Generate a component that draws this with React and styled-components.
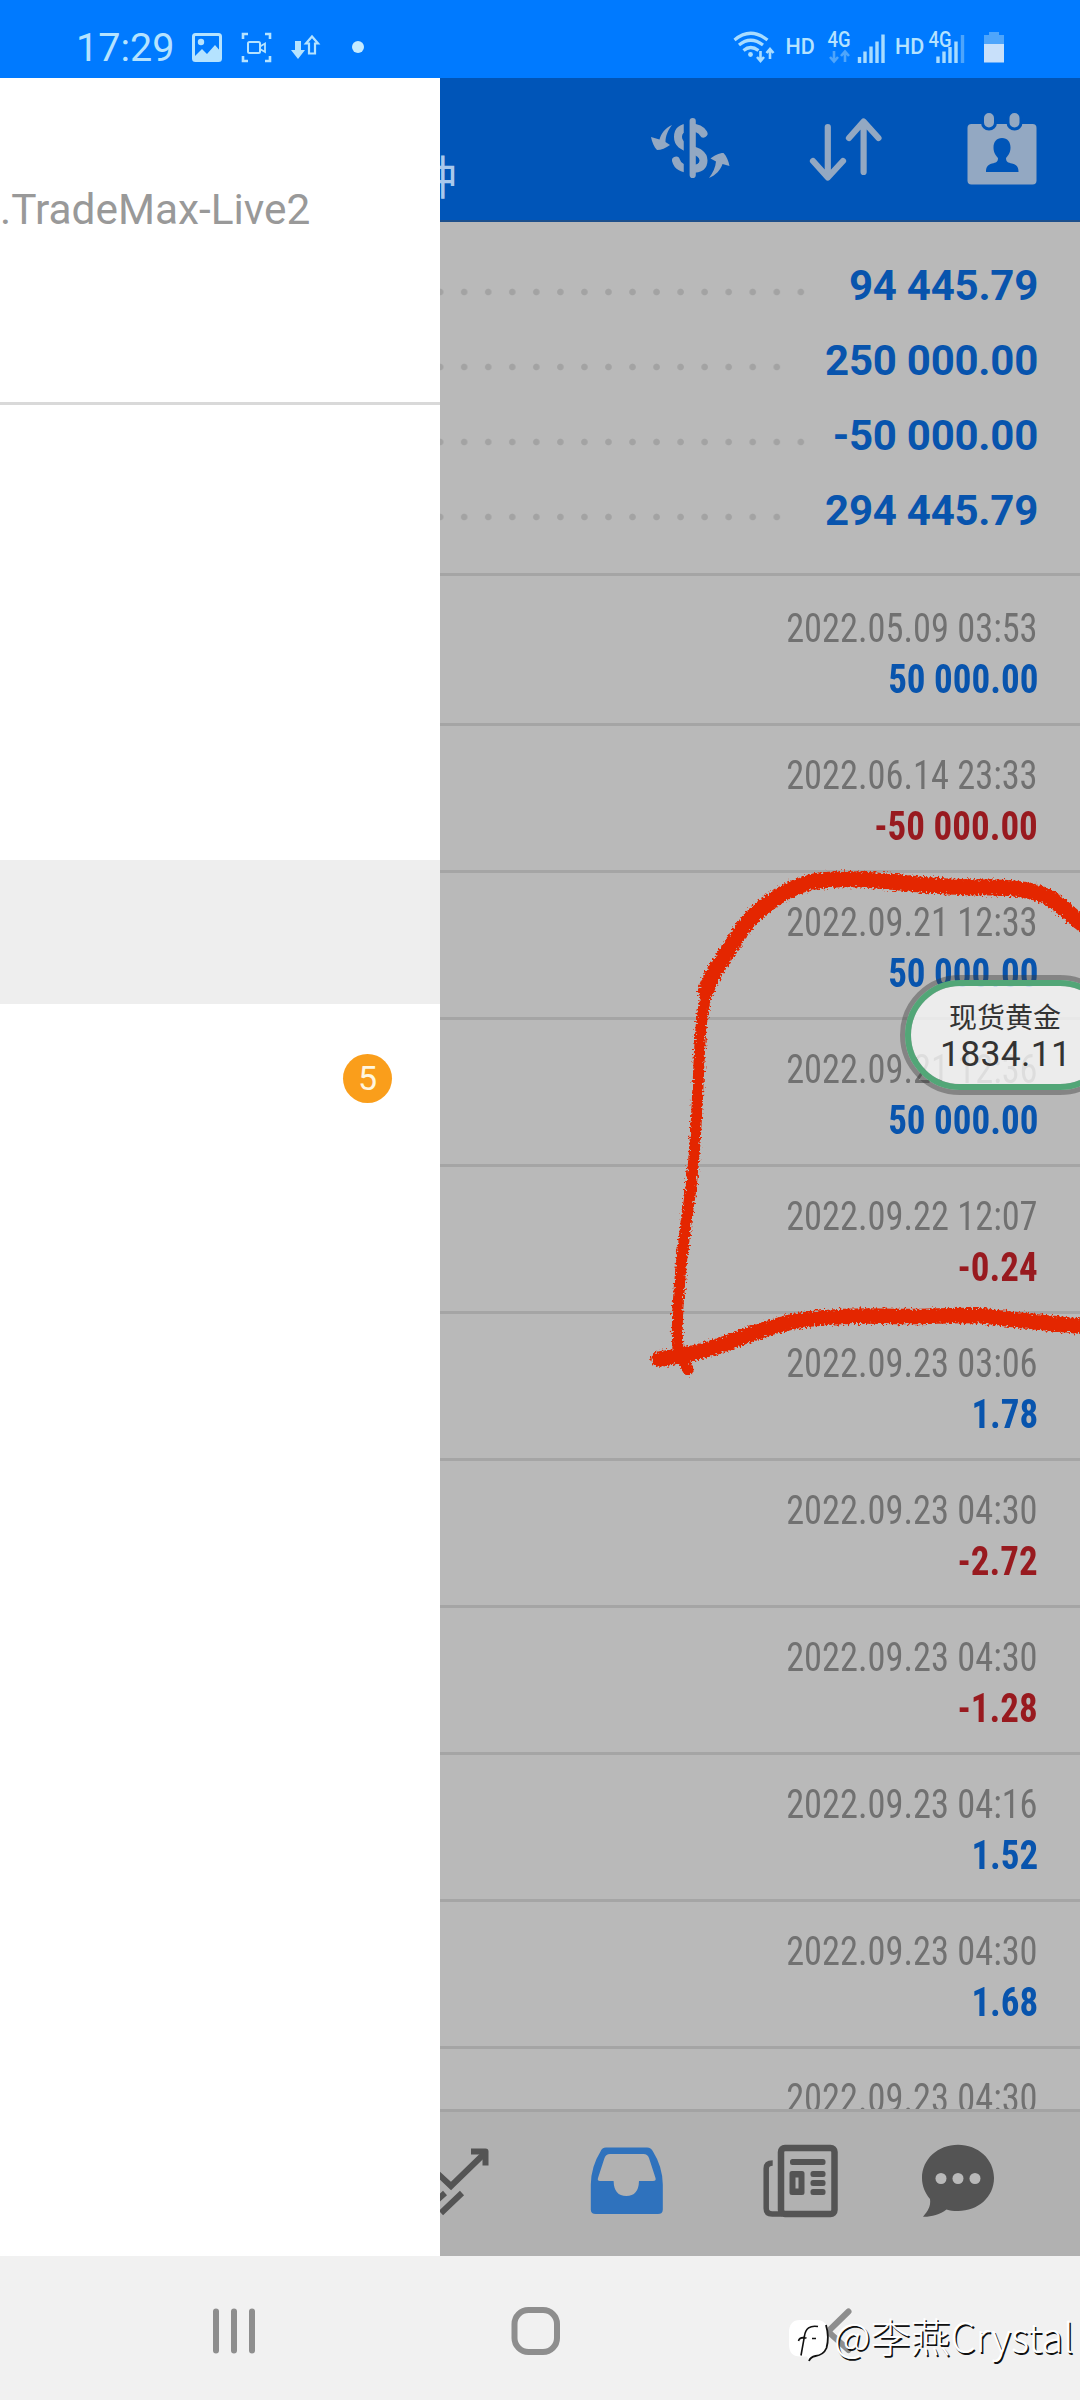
import React from 'react';
import styled, { createGlobalStyle } from 'styled-components';

const GlobalStyle = createGlobalStyle`
  * {
    box-sizing: border-box;
  }

  body {
    margin: 0;
    font-family: Roboto, "Noto Sans CJK SC", sans-serif;
  }

  svg {
    display: block;
    flex: none;
  }
`;

const Phone = styled.div`
  position: relative;
  display: flex;
  flex-direction: column;
  width: 1080px;
  height: 2400px;
  overflow: hidden;
  background: #fff;
`;

const StatusBar = styled.header`
  display: flex;
  justify-content: space-between;
  height: 78px;
  padding: 18px 76px 0 76px;
  background: #007aff;
  color: #b5e3ff;
`;

const StatusGroup = styled.div`
  display: flex;
  align-items: center;
  height: 60px;
`;

const Clock = styled.span`
  width: 110px;
  font-size: 39.5px;
  line-height: 62px;
`;

const Body = styled.div`
  display: flex;
  height: 2178px;
`;

const Drawer = styled.aside`
  width: 440px;
  background: #fff;
`;

const DrawerHead = styled.div`
  height: 327px;
  padding-top: 106px;
  border-bottom: 3px solid #d9d9d9;
  color: #999;
  font-size: 42.4px;
  line-height: 51px;
  white-space: nowrap;
`;

const DrawerList = styled.ul`
  margin: 0;
  padding: 455px 0 0;
  list-style: none;
`;

const DrawerItem = styled.li`
  display: flex;
  align-items: center;
  justify-content: flex-end;
  height: 144px;
  padding: 4px 48px 0 0;
  background: ${({ $active }) => ($active ? '#eeeeee' : 'transparent')};
`;

const Badge = styled.span`
  width: 49px;
  height: 49px;
  border-radius: 50%;
  background: #fa9e1b;
  color: #fff6e0;
  font-size: 34px;
  line-height: 49px;
  text-align: center;
`;

const Main = styled.main`
  display: flex;
  flex-direction: column;
  width: 640px;
  overflow: hidden;
  background: #b9b9b9;
`;

const AppBar = styled.div`
  display: flex;
  align-items: flex-start;
  height: 144px;
  background: #0055b8;
  border-bottom: 2px solid #1c4f8c;
`;

const Subtitle = styled.span`
  width: 200px;
  margin: 66px 0 0 -29px;
  color: #a9c8ec;
  font-family: "Noto Sans CJK SC", sans-serif;
  font-size: 46px;
  line-height: 60px;
`;

const ToolbarIcons = styled.div`
  display: flex;
  padding: 32px 0 0 29px;
  gap: 64px;
`;

const Summary = styled.section`
  padding: 26px 42px 25px 0;
  border-bottom: 3px solid #a5a5a5;
`;

const SummaryRow = styled.div`
  display: flex;
  justify-content: space-between;
  height: 75px;
  color: #0854ad;
  font-size: 42px;
  font-weight: 700;
  letter-spacing: -0.25px;
  line-height: 75px;
`;

const Leader = styled.span`
  width: ${({ $dots }) => $dots * 24.05 + 12}px;
  background: radial-gradient(circle at center, #a3a3a3 2.8px, transparent 3.8px) -11.9px 33.5px / 24.05px 24px repeat-x;
  background-position-y: 32px;
`;

const Deals = styled.ul`
  flex: 1;
  margin: 0;
  padding: 3px 0 0;
  overflow: hidden;
  list-style: none;
`;

const Deal = styled.li`
  display: flex;
  flex-direction: column;
  align-items: flex-end;
  height: 147px;
  padding: 24px 42px 0 0;
  border-bottom: 3px solid #a5a5a5;
  font-size: 40px;
  line-height: 51px;
  font-stretch: 75%;
`;

const DealTime = styled.span`
  color: #717171;
  transform: scaleX(0.909);
  transform-origin: right;
`;

const DealAmount = styled.span`
  color: ${({ $loss }) => ($loss ? '#981a1f' : '#0854ad')};
  font-weight: 700;
  transform: scaleX(0.925);
  transform-origin: right;
`;

const TabBar = styled.nav`
  display: flex;
  height: 147px;
  padding-top: 24px;
  border-top: 3px solid #a3a3a3;
  background: #b1b1b1;
`;

const NavBar = styled.footer`
  height: 144px;
  background: #f1f1f1;
`;

const PriceBubble = styled.div`
  position: absolute;
  top: 975px;
  left: 900px;
  width: 220px;
  height: 120px;
  border: 5px solid rgba(60, 60, 60, 0.42);
  border-radius: 60px;
`;

const BubbleInner = styled.div`
  display: flex;
  flex-direction: column;
  height: 110px;
  padding: 13px 0 0 29px;
  border: 6px solid #52a677;
  border-radius: 55px;
  background: rgba(249, 249, 249, 0.8);
  background-clip: padding-box;
  color: #333;
`;

const BubbleName = styled.span`
  margin-left: 9px;
  font-family: "Noto Sans CJK SC", sans-serif;
  font-size: 28px;
  line-height: 34px;
`;

const BubblePrice = styled.span`
  font-size: 35.5px;
  letter-spacing: 0.3px;
  line-height: 42px;
`;

const Marker = styled.svg`
  position: absolute;
  top: 861px;
  left: 640px;
`;

const Watermark = styled.div`
  position: absolute;
  top: 2312px;
  left: 786px;
  display: flex;
  height: 52px;
  color: #fff;
  font-family: "Noto Sans CJK SC", sans-serif;
  font-size: 40px;
  font-weight: 300;
  line-height: 46px;
  white-space: nowrap;
  text-shadow: 1.5px 1.5px 0.5px #111;
`;

const totals = [
  { value: '94 445.79', dots: 15 },
  { value: '250 000.00', dots: 14 },
  { value: '-50 000.00', dots: 15 },
  { value: '294 445.79', dots: 14 },
];

const deals = [
  { time: '2022.05.09 03:53', amount: '50 000.00' },
  { time: '2022.06.14 23:33', amount: '-50 000.00' },
  { time: '2022.09.21 12:33', amount: '50 000.00' },
  { time: '2022.09.21 12:36', amount: '50 000.00' },
  { time: '2022.09.22 12:07', amount: '-0.24' },
  { time: '2022.09.23 03:06', amount: '1.78' },
  { time: '2022.09.23 04:30', amount: '-2.72' },
  { time: '2022.09.23 04:30', amount: '-1.28' },
  { time: '2022.09.23 04:16', amount: '1.52' },
  { time: '2022.09.23 04:30', amount: '1.68' },
  { time: '2022.09.23 04:30', amount: '' },
];

const StatusLeftIcons = () => (
  <svg width="190" height="60" viewBox="186 18 190 60" fill="none" stroke="#b5e3ff">
    <rect x="193.5" y="34.5" width="27" height="26" rx="2" strokeWidth="3" />
    <circle cx="201" cy="42" r="3.2" fill="#b5e3ff" stroke="none" />
    <path d="M194 57l8-8 5 5 8-9 6 7v9h-27z" fill="#b5e3ff" stroke="none" />
    <path d="M243 39v-5h5M265 34h5v5M270 56v5h-5M248 61h-5v-5" strokeWidth="2.6" />
    <rect x="248" y="42" width="12" height="11" rx="1.5" strokeWidth="2" />
    <path d="M260 46.5l5-3v8.5l-5-3z" strokeWidth="1.8" />
    <path d="M295 41h6v9h4l-7 9-7-9h4z" fill="#b5e3ff" stroke="none" />
    <path d="M309 53.5v-10h-3l6-7 6 7h-3v10z" strokeWidth="2.2" />
    <circle cx="358" cy="47" r="6" fill="#c5ebff" stroke="none" />
  </svg>
);

const SmallText = styled.text`
  font-family: Roboto, sans-serif;
  font-size: 21.5px;
  font-weight: 500;
  stroke: none;
  fill: #b5e3ff;
`;

const StatusRightIcons = () => (
  <svg width="274" height="60" viewBox="730 18 274 60" fill="none" stroke="#a8dcff">
    <g strokeWidth="3.2">
      <path d="M734.5 40q16-13.5 33 0" />
      <path d="M739 45q11.5-9.5 24 0" />
      <path d="M743.5 50.5q7-6 15 0" />
    </g>
    <circle cx="750.5" cy="54.5" r="2.4" fill="#a8dcff" stroke="none" />
    <path d="M760.5 51v9M757 57l3.5 4 3.5-4M770 59v-9M766.5 53l3.5-4 3.5 4" strokeWidth="2.6" />
    <SmallText x="785.5" y="54">HD</SmallText>
    <SmallText x="827.5" y="46.5" textLength="23" lengthAdjust="spacingAndGlyphs">4G</SmallText>
    <path d="M834 51v10M830 57l4 4.5 4-4.5M845 62v-10M841 56l4-4.5 4 4.5" stroke="#4ea5fb" strokeWidth="2.6" />
    <g strokeWidth="3.4">
      <path d="M859.5 57v6M865 51.5v11.5M871 46.5v16.5M877 41.5v21.5M883 34.5v28.5" />
      <path d="M938 56.5v6.5M944 51.5v11.5M950 47v16M956 41.5v21.5" />
      <path d="M962.5 35v28" stroke="#4ea5fb" />
    </g>
    <SmallText x="895" y="54">HD</SmallText>
    <SmallText x="928.5" y="46.5" textLength="23" lengthAdjust="spacingAndGlyphs">4G</SmallText>
    <path d="M984 44v-9h5v-3h10v3h5v9z" fill="#4ea5fb" stroke="none" />
    <rect x="984" y="44" width="20" height="18.5" fill="#c8e0fa" stroke="none" />
  </svg>
);

const DollarIcon = () => (
  <svg width="100" height="80" viewBox="640 110 100 80" fill="none" stroke="#93a8c2">
    <path
      d="M703.5 133.5C701 129 697 127.5 690 127.5C681 127.5 678 131.5 678 137C678 144 683 146 690 149C698 152 703.5 154 703.5 160.5C703.5 166.5 699 169 691 169C682 169 677.5 166 676 160.5"
      strokeWidth="8"
      strokeLinecap="round"
    />
    <path d="M687 118v60" stroke="#0055b8" strokeWidth="6.5" />
    <path d="M692.7 121v54" strokeWidth="6.2" strokeLinecap="round" />
    <path
      d="M672 125C665 128 661 134 659.5 139.5L651 137C652 142 654 147 657 150C661 150 666 148 670 145L665.5 142C665.5 136 668 130 672 125z"
      fill="#93a8c2"
      stroke="none"
    />
    <path
      d="M709 178C716 175 720.5 170 722.5 164L729.5 166C728.5 161 726.5 156 723.5 153C719 153 714 155.5 710.5 158.5L716 161.5C715.5 167 713 173 709 178z"
      fill="#93a8c2"
      stroke="none"
    />
  </svg>
);

const SortIcon = () => (
  <svg width="94" height="80" viewBox="804 110 94 80" fill="none" stroke="#93a8c2" strokeWidth="6.2" strokeLinecap="round" strokeLinejoin="round">
    <path d="M827.8 127v50M813 161l14.8 16.5L843 161" />
    <path d="M863.6 172v-50M849 138l14.6-16.5L878.5 138" />
  </svg>
);

const CalendarIcon = () => (
  <svg width="80" height="80" viewBox="962 110 80 80">
    <rect x="967.5" y="124" width="69" height="60.5" rx="4" fill="#93a8c2" />
    <g fill="#93a8c2" stroke="#0055b8" strokeWidth="3">
      <rect x="982.5" y="111.5" width="13" height="17.5" rx="6.5" />
      <rect x="1008" y="111.5" width="13" height="17.5" rx="6.5" />
    </g>
    <path
      d="M1002 138C1007.5 138 1010.5 142 1010.5 147.5C1010.5 152.5 1008.5 155 1006 158C1006 162 1008 162.5 1012 163.5C1017 165 1018.5 167 1018.5 172H986C986 167 987.5 165 992 163.5C996 162.5 998 162 998 158C995.5 155 993.5 152.5 993.5 147.5C993.5 142 996.5 138 1002 138z"
      fill="#0055b8"
    />
  </svg>
);

const TabIcons = () => (
  <svg width="640" height="100" viewBox="440 2136 640 100" fill="none" stroke="#545454">
    <path d="M436 2172l15 14 35-34" strokeWidth="6" />
    <path d="M471 2151.5h14.5v14" strokeWidth="6" strokeLinejoin="round" />
    <path d="M441 2213l21-20M436 2201l9-8" strokeWidth="6" />
    <path
      fillRule="evenodd"
      d="M606 2147.5h41q4 0 6 4q9.5 15 9.8 33v25q0 4.5-5 4.5h-62q-5 0-5-4.5v-25q.3-18 9.7-33q1.5-4 5.5-4z
         M610 2154q-4 0-5.5 4l-6.5 20q-1 3 2 3h13.6q.4 15 12.700 15t12.700-15h14q3.5 0 2.5-3l-6.5-20q-1.5-4-5.5-4z"
      fill="#2f72bd"
      stroke="none"
    />
    <rect x="781" y="2148" width="53.5" height="66" rx="4" strokeWidth="6.5" />
    <path d="M772.7 2163q-6.5 0-6.5 5.5v40q0 5.5 6 5.5h10" strokeWidth="5.5" />
    <g fill="#545454" stroke="none">
      <rect x="790" y="2159" width="35.5" height="6" rx="2.5" />
      <path fillRule="evenodd" d="M792 2171h10q2.5 0 2.5 2.5v19q0 2.5-2.5 2.5h-10q-2.5 0-2.5-2.5v-19q0-2.5 2.5-2.5zM795.5 2177.5v11h3v-11z" />
      <rect x="810.5" y="2171" width="15" height="6" rx="2.5" />
      <rect x="810.5" y="2180" width="15" height="6" rx="2.5" />
      <rect x="810.5" y="2189" width="15" height="6" rx="2.5" />
      <path d="M958 2144.7C978 2144.7 994 2159 994 2178C994 2197 978 2211 958 2211C953 2211 950 2210.5 946.5 2209.5C940 2215 930 2217 923 2216.7C928 2211 931 2206 930 2199C925 2193 922 2186 922 2178C922 2159 938 2144.7 958 2144.7z" />
    </g>
    <g fill="#b9b9b9" stroke="none">
      <circle cx="941" cy="2178.5" r="5.5" />
      <circle cx="958" cy="2178.5" r="5.5" />
      <circle cx="975" cy="2178.5" r="5.5" />
    </g>
  </svg>
);

const NavIcons = () => (
  <svg width="1080" height="144" viewBox="0 2256 1080 144" fill="none" stroke="#8e8e8e" strokeWidth="6" strokeLinecap="round">
    <path d="M216 2311.5v39M234 2311.5v39M252 2311.5v39" />
    <rect x="514.5" y="2310" width="42.5" height="42" rx="14" />
    <path d="M848.5 2311.5L828 2331.5L848.5 2350" strokeLinejoin="round" />
  </svg>
);

const WatermarkLogo = () => (
  <svg width="48" height="52" viewBox="786 2312 48 52" fill="none">
    <path
      d="M800 2320h16q12 0 12 13v10q0 12-13 13l-6 5.5-2-5h-7q-11 0-11-12v-12q0-12.5 11-12.5z"
      fill="#fff"
    />
    <path d="M818 2326.5q-12-2-13.5 9.5l-3.5 19.5M798.5 2341q1-4.5 8-3M812 2338.5h4" stroke="#111" strokeWidth="1.6" />
    <path d="M826 2325q3.5 12 .5 23q-3 7-11 8q-5 1-6.5 5" stroke="#111" strokeWidth="1.8" />
  </svg>
);

// hand drawn crayon loop around the three deposits
const MarkerLoop = () => (
  <Marker width="440" height="540" viewBox="640 860 440 540" fill="none" stroke="#e42806" strokeLinecap="round" strokeLinejoin="round">
    <filter id="crayon" x="-5%" y="-5%" width="110%" height="110%">
      <feTurbulence type="fractalNoise" baseFrequency="0.5" numOctaves="2" seed="4" result="noise" />
      <feDisplacementMap in="SourceGraphic" in2="noise" scale="8" xChannelSelector="R" yChannelSelector="G" />
    </filter>
    <g filter="url(#crayon)">
      <path
        d="M706 990C710 975 728 950 743 927C757 908 785 887 813 880.5C840 876 870 879 900 881.5C930 885 960 886.5 990 886.5C1015 886 1035 890 1048 896C1062 904 1070 914 1090 929"
        strokeWidth="16"
      />
      <path
        d="M714 974C700 1000 700 1040 698.5 1074C697 1110 695 1160 690 1194C684 1235 680 1270 678.5 1298C677 1320 677 1335 678 1348L688 1369"
        strokeWidth="11"
      />
      <path
        d="M659 1358C690 1354 710 1349 740 1337C765 1328 790 1319 820 1317C850 1314 880 1315 900 1315.5C930 1316 960 1313 985 1315C1010 1319 1050 1322 1090 1326"
        strokeWidth="15.5"
      />
    </g>
  </Marker>
);

const App = () => {
  return (
    <Phone>
      <GlobalStyle />
      <StatusBar>
        <StatusGroup>
          <Clock>17:29</Clock>
          <StatusLeftIcons />
        </StatusGroup>
        <StatusGroup>
          <StatusRightIcons />
        </StatusGroup>
      </StatusBar>

      <Body>
        <Drawer>
          <DrawerHead>.TradeMax-Live2</DrawerHead>
          <DrawerList>
            <DrawerItem $active />
            <DrawerItem>
              <Badge>5</Badge>
            </DrawerItem>
          </DrawerList>
        </Drawer>

        <Main>
          <AppBar>
            <Subtitle>钟</Subtitle>
            <ToolbarIcons>
              <DollarIcon />
              <SortIcon />
              <CalendarIcon />
            </ToolbarIcons>
          </AppBar>

          <Summary>
            {totals.map(total => (
              <SummaryRow key={total.value}>
                <Leader $dots={total.dots} />
                <span>{total.value}</span>
              </SummaryRow>
            ))}
          </Summary>

          <Deals>
            {deals.map((deal, index) => (
              <Deal key={index}>
                <DealTime>{deal.time}</DealTime>
                <DealAmount $loss={deal.amount.startsWith('-')}>{deal.amount}</DealAmount>
              </Deal>
            ))}
          </Deals>

          <TabBar>
            <TabIcons />
          </TabBar>
        </Main>
      </Body>

      <NavBar>
        <NavIcons />
      </NavBar>

      <PriceBubble>
        <BubbleInner>
          <BubbleName>现货黄金</BubbleName>
          <BubblePrice>1834.11</BubblePrice>
        </BubbleInner>
      </PriceBubble>
      <MarkerLoop />
      <Watermark>
        <WatermarkLogo />
        <span>@李燕Crystal</span>
      </Watermark>
    </Phone>
  );
};

export default App;
